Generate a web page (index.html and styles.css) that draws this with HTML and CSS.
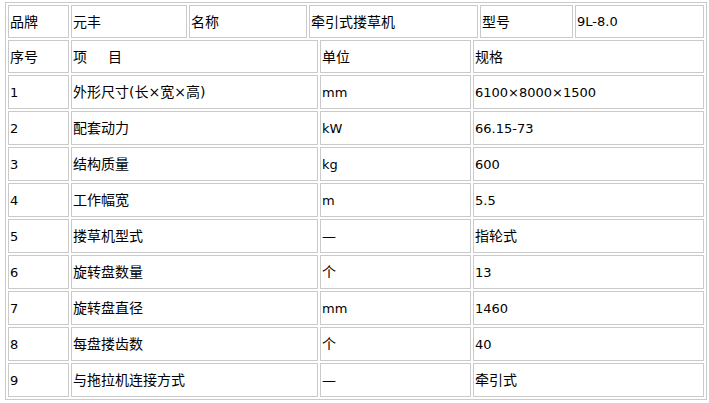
FILE: index.html
```html
<!DOCTYPE html>
<html lang="zh">
<head>
<meta charset="utf-8">
<title>9L-8.0 牵引式搂草机</title>
<link rel="stylesheet" href="styles.css">
</head>
<body>
<div class="sheet">
  <div class="row row-brand">
    <div class="cell">品牌</div>
    <div class="cell">元丰</div>
    <div class="cell">名称</div>
    <div class="cell">牵引式搂草机</div>
    <div class="cell">型号</div>
    <div class="cell num">9L-8.0</div>
  </div>
  <div class="row row-spec row-head">
    <div class="cell">序号</div>
    <div class="cell">项<span class="gap"></span>目</div>
    <div class="cell">单位</div>
    <div class="cell">规格</div>
  </div>
  <div class="row row-spec">
    <div class="cell num">1</div>
    <div class="cell">外形尺寸(长×宽×高)</div>
    <div class="cell num">mm</div>
    <div class="cell num">6100×8000×1500</div>
  </div>
  <div class="row row-spec">
    <div class="cell num">2</div>
    <div class="cell">配套动力</div>
    <div class="cell num">kW</div>
    <div class="cell num">66.15-73</div>
  </div>
  <div class="row row-spec">
    <div class="cell num">3</div>
    <div class="cell">结构质量</div>
    <div class="cell num">kg</div>
    <div class="cell num">600</div>
  </div>
  <div class="row row-spec">
    <div class="cell num">4</div>
    <div class="cell">工作幅宽</div>
    <div class="cell num">m</div>
    <div class="cell num">5.5</div>
  </div>
  <div class="row row-spec">
    <div class="cell num">5</div>
    <div class="cell">搂草机型式</div>
    <div class="cell">—</div>
    <div class="cell">指轮式</div>
  </div>
  <div class="row row-spec">
    <div class="cell num">6</div>
    <div class="cell">旋转盘数量</div>
    <div class="cell">个</div>
    <div class="cell num">13</div>
  </div>
  <div class="row row-spec">
    <div class="cell num">7</div>
    <div class="cell">旋转盘直径</div>
    <div class="cell num">mm</div>
    <div class="cell num">1460</div>
  </div>
  <div class="row row-spec">
    <div class="cell num">8</div>
    <div class="cell">每盘搂齿数</div>
    <div class="cell">个</div>
    <div class="cell num">40</div>
  </div>
  <div class="row row-spec">
    <div class="cell num">9</div>
    <div class="cell">与拖拉机连接方式</div>
    <div class="cell">—</div>
    <div class="cell">牵引式</div>
  </div>
</div>
</body>
</html>
```

FILE: styles.css
```css
html, body {
  margin: 0;
  padding: 0;
  background: #ffffff;
}

body {
  padding: 2px 0 0 5px;
  font-family: "DejaVu Sans", "Noto Sans CJK SC", sans-serif;
  font-size: 14px;
  color: #000000;
}

.sheet {
  width: 702px;
  box-sizing: border-box;
  border: 1px solid #cacaca;
  padding: 2px;
  display: flex;
  flex-direction: column;
  gap: 2px;
}

.row {
  display: grid;
  gap: 2px;
  height: 34px;
}

.row-brand {
  grid-template-columns: 61px 116px 118px 169px 93px 129px;
  height: 33px;
}

.row-spec {
  grid-template-columns: 61px 247px 151px 231px;
}

.row-head {
  height: 33px;
}

.cell {
  box-sizing: border-box;
  border: 1px solid #cacaca;
  padding: 0 1px;
  display: flex;
  align-items: center;
  white-space: nowrap;
  line-height: 1;
}

.num {
  font-size: 13px;
}

.gap {
  display: inline-block;
  width: 21px;
}
```
